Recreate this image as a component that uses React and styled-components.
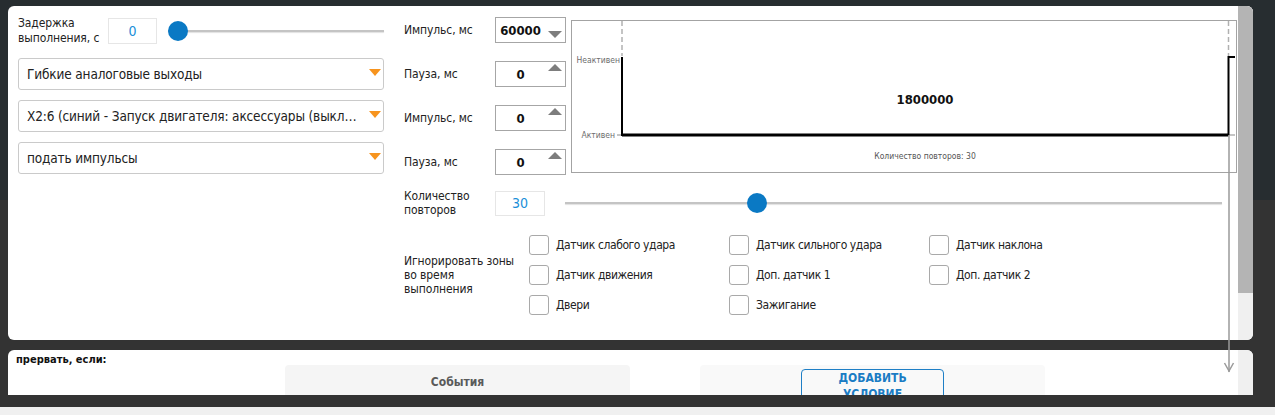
import React from "react";
import styled, { createGlobalStyle } from "styled-components";

const GlobalStyle = createGlobalStyle`
  html, body {
    margin: 0;
    padding: 0;
  }
  body {
    font-family: "DejaVu Sans Condensed", Tahoma, "DejaVu Sans", sans-serif;
    color: #222;
    background: #333;
  }
`;

const Page = styled.div`
  width: 1275px;
  height: 415px;
  display: flex;
  flex-direction: column;
  overflow: hidden;
`;

const Backdrop = styled.div`
  height: 407px;
  flex: none;
  padding: 6px 0 0 8px;
  box-sizing: border-box;
  background: linear-gradient(180deg, #272d30 0, #272d30 200px, #333 200px);
`;

const BottomStrip = styled.div`
  height: 8px;
  flex: none;
  background: #f0f0f0;
`;

const Viewport = styled.div`
  position: relative;
  width: 1245px;
  height: 389px;
  overflow: hidden;
  display: flex;
  flex-direction: column;
  gap: 10px;
`;

const Card = styled.div`
  flex: none;
  display: flex;
  height: ${({ h }) => h}px;
  background: #fff;
  border-radius: 6px;
  overflow: hidden;
`;

const CardBody = styled.div`
  flex: 1;
  min-width: 0;
  box-sizing: border-box;
  padding: ${({ pad }) => pad};
`;

const Track = styled.div`
  width: 15px;
  flex: none;
  background: #f0f0f0;
  display: flex;
  flex-direction: column;
`;

const Thumb = styled.div`
  height: ${({ h }) => h}px;
  background: #b4b4b4;
`;

const MainGrid = styled.div`
  display: grid;
  grid-template-columns: 366px 834px;
  column-gap: 20px;
`;

const LeftCol = styled.div`
  display: flex;
  flex-direction: column;
  gap: 10px;
`;

const DelayRow = styled.div`
  display: flex;
  align-items: center;
  height: 26px;
  margin-bottom: 4px;
`;

const Label = styled.div`
  width: ${({ w }) => w}px;
  flex: none;
  font-size: 12px;
  line-height: ${({ lh }) => lh || 15}px;
  letter-spacing: -0.1px;
  color: #222;
`;

const ValueBox = styled.div`
  width: ${({ w }) => w}px;
  height: ${({ h }) => h || 26}px;
  flex: none;
  box-sizing: border-box;
  border: 1px solid #e6e6e6;
  display: flex;
  align-items: center;
  justify-content: center;
  font-size: 14px;
  color: #1a8fd8;
`;

const SliderWrap = styled.div`
  position: relative;
  flex: 1;
  height: 20px;
  margin: ${({ m }) => m || "0"};
`;

const SliderLine = styled.div`
  position: absolute;
  left: 0;
  right: 0;
  top: 9px;
  height: 2px;
  background: #c4c4c4;
  box-shadow: 0 1px 1px rgba(0, 0, 0, 0.12);
`;

const SliderKnob = styled.div`
  position: absolute;
  top: 0;
  width: 20px;
  height: 20px;
  border-radius: 50%;
  background: #0a79c4;
`;

const Slider = ({ value, max, m }) => {
  const ratio = value / max;
  return (
    <SliderWrap m={m}>
      <SliderLine />
      <SliderKnob style={{ left: `calc((100% - 20px) * ${ratio})` }} />
    </SliderWrap>
  );
};

const SelectBox = styled.div`
  height: 32px;
  box-sizing: border-box;
  border: 1px solid #cacaca;
  border-radius: 3px;
  display: flex;
  align-items: center;
  padding: 0 2px 0 8px;
  font-size: 13.5px;
  letter-spacing: -0.15px;
  color: #222;
`;

const SelectText = styled.span`
  flex: 1;
  min-width: 0;
  white-space: nowrap;
  overflow: hidden;
  text-overflow: ellipsis;
`;

const OrangeArrow = styled.span`
  flex: none;
  width: 0;
  height: 0;
  margin: -3px 0 0 8px;
  border-left: 6.5px solid transparent;
  border-right: 6.5px solid transparent;
  border-top: 7px solid #f7941e;
`;

const Select = ({ children }) => (
  <SelectBox>
    <SelectText>{children}</SelectText>
    <OrangeArrow />
  </SelectBox>
);

const RightCol = styled.div`
  display: flex;
  flex-direction: column;
`;

const TopRow = styled.div`
  display: flex;
  align-items: flex-start;
`;

const PulseGrid = styled.div`
  display: grid;
  grid-template-columns: 91px 71px;
  grid-auto-rows: 26px;
  row-gap: 18px;
  margin-top: -1px;
  align-items: center;
`;

const PulseBox = styled.div`
  height: 26px;
  box-sizing: border-box;
  border: 1px solid #a6a6a6;
  display: flex;
`;

const PulseValue = styled.div`
  flex: 1;
  display: flex;
  align-items: center;
  justify-content: center;
  font-size: 13px;
  font-weight: bold;
  color: #111;
`;

const Spin = styled.div`
  width: 20px;
  flex: none;
  display: flex;
  justify-content: center;
  padding-top: ${({ dir }) => (dir === "down" ? 13 : 2)}px;
  box-sizing: border-box;
`;

const SpinArrow = styled.span`
  width: 0;
  height: 0;
  border-left: 7px solid transparent;
  border-right: 7px solid transparent;
  ${({ dir }) =>
    dir === "down"
      ? "border-top: 7px solid #7d7d7d;"
      : "border-bottom: 7px solid #7d7d7d;"}
`;

const PulseInput = ({ value, dir }) => (
  <PulseBox>
    <PulseValue>{value}</PulseValue>
    <Spin dir={dir}>
      <SpinArrow dir={dir} />
    </Spin>
  </PulseBox>
);

const ChartBox = styled.div`
  flex: 1;
  height: 153px;
  margin: 2px 1px 0 5px;
  box-sizing: border-box;
  border: 1px solid #a3a3a3;
`;

const Chart = () => (
  <ChartBox>
    <svg width="664" height="151" viewBox="0 0 664 151" style={{ display: "block" }}>
      <g fontFamily="'DejaVu Sans Condensed', 'DejaVu Sans', sans-serif">
        <line x1="50" y1="0" x2="50" y2="35" stroke="#b0b0b0" strokeWidth="1.5" strokeDasharray="5 3" />
        <line x1="656.5" y1="0" x2="656.5" y2="35" stroke="#b0b0b0" strokeWidth="1.5" strokeDasharray="5 3" />
        <text x="48" y="42" fontSize="8.5" fill="#6d6d6d" textAnchor="end">Неактивен</text>
        <text x="43" y="117" fontSize="8.5" fill="#6d6d6d" textAnchor="end">Активен</text>
        <line x1="45" y1="114" x2="50" y2="114" stroke="#b0b0b0" strokeWidth="1.5" />
        <line x1="657" y1="114" x2="663" y2="114" stroke="#b0b0b0" strokeWidth="1.5" />
        <polyline points="50,36 50,114 656.5,114" fill="none" stroke="#000" strokeWidth="2" />
        <line x1="50" y1="114" x2="656.5" y2="114" stroke="#000" strokeWidth="3" />
        <polyline points="656.5,114 656.5,36 663,36" fill="none" stroke="#000" strokeWidth="2" />
        <text x="353" y="83" fontSize="13" fontWeight="bold" fill="#111" textAnchor="middle">1800000</text>
        <text x="353" y="138" fontSize="8.5" fill="#555" textAnchor="middle">Количество повторов: 30</text>
      </g>
    </svg>
  </ChartBox>
);

const RepeatRow = styled.div`
  display: flex;
  align-items: center;
  margin-top: 14px;
`;

const IgnoreRow = styled.div`
  display: flex;
  align-items: center;
  margin-top: 18px;
`;

const CheckGrid = styled.div`
  display: grid;
  grid-template-columns: repeat(3, 200px);
  grid-auto-rows: 20px;
  row-gap: 10px;
`;

const CheckItem = styled.label`
  display: flex;
  align-items: center;
  gap: 7px;
  font-size: 12px;
  letter-spacing: -0.4px;
  color: #222;
`;

const CheckSquare = styled.span`
  width: 20px;
  height: 20px;
  box-sizing: border-box;
  border: 1px solid #a9a9a9;
  border-radius: 3px;
  background: #fff;
  flex: none;
`;

const Check = ({ children }) => (
  <CheckItem>
    <CheckSquare />
    {children}
  </CheckItem>
);

const AbortTitle = styled.div`
  height: 12px;
  font-size: 11px;
  font-weight: bold;
  line-height: 14px;
  color: #111;
`;

const AbortRow = styled.div`
  display: flex;
  gap: 70px;
  margin-left: 269px;
`;

const AbortPane = styled.div`
  width: 345px;
  height: 80px;
  border-radius: 4px;
  background: ${({ bg }) => bg};
  display: flex;
  justify-content: center;
  align-items: flex-start;
  padding-top: ${({ pt }) => pt}px;
  box-sizing: border-box;
`;

const PaneTitle = styled.div`
  font-size: 12px;
  font-weight: bold;
  color: #5a5a5a;
`;

const AddButton = styled.div`
  width: 143px;
  height: 34px;
  box-sizing: border-box;
  padding: 0 16px;
  border: 1px solid #1f7fc6;
  border-radius: 4px;
  font-size: 12px;
  font-weight: bold;
  line-height: 16px;
  color: #1a7cc4;
  text-align: center;
  text-transform: uppercase;
`;

const ArrowOverlay = styled.svg`
  position: absolute;
  left: 1215px;
  top: 129px;
  pointer-events: none;
`;

export default function App() {
  return (
    <Page>
      <GlobalStyle />
      <Backdrop>
        <Viewport>
          <Card h={334}>
            <CardBody pad="12px 0 0 10px">
              <MainGrid>
                <LeftCol>
                  <DelayRow>
                    <Label w={90}>
                      Задержка
                      <br />
                      выполнения, с
                    </Label>
                    <ValueBox w={49}>0</ValueBox>
                    <Slider value={0} max={100} m="0 0 0 11px" />
                  </DelayRow>
                  <Select>Гибкие аналоговые выходы</Select>
                  <Select>X2:6 (синий - Запуск двигателя: аксессуары (выключено))</Select>
                  <Select>подать импульсы</Select>
                </LeftCol>
                <RightCol>
                  <TopRow>
                    <PulseGrid>
                      <Label w={91}>Импульс, мс</Label>
                      <PulseInput value="60000" dir="down" />
                      <Label w={91}>Пауза, мс</Label>
                      <PulseInput value="0" dir="up" />
                      <Label w={91}>Импульс, мс</Label>
                      <PulseInput value="0" dir="up" />
                      <Label w={91}>Пауза, мс</Label>
                      <PulseInput value="0" dir="up" />
                    </PulseGrid>
                    <Chart />
                  </TopRow>
                  <RepeatRow>
                    <Label w={91} lh={14}>
                      Количество
                      <br />
                      повторов
                    </Label>
                    <ValueBox w={50} h={25}>30</ValueBox>
                    <Slider value={30} max={105} m="0 16px 0 20px" />
                  </RepeatRow>
                  <IgnoreRow>
                    <Label w={125} lh={14}>
                      Игнорировать зоны
                      <br />
                      во время
                      <br />
                      выполнения
                    </Label>
                    <CheckGrid>
                      <Check>Датчик слабого удара</Check>
                      <Check>Датчик сильного удара</Check>
                      <Check>Датчик наклона</Check>
                      <Check>Датчик движения</Check>
                      <Check>Доп. датчик 1</Check>
                      <Check>Доп. датчик 2</Check>
                      <Check>Двери</Check>
                      <Check>Зажигание</Check>
                    </CheckGrid>
                  </IgnoreRow>
                </RightCol>
              </MainGrid>
            </CardBody>
            <Track>
              <Thumb h={287} />
            </Track>
          </Card>
          <Card h={183}>
            <CardBody pad="3px 0 0 8px">
              <AbortTitle>прервать, если:</AbortTitle>
              <AbortRow>
                <AbortPane bg="#f5f5f5" pt={10}>
                  <PaneTitle>События</PaneTitle>
                </AbortPane>
                <AbortPane bg="#f9f9f9" pt={4}>
                  <AddButton>Добавить условие</AddButton>
                </AbortPane>
              </AbortRow>
            </CardBody>
            <Track />
          </Card>
          <ArrowOverlay width="12" height="240" viewBox="0 0 12 240">
            <line x1="6" y1="0" x2="6" y2="237" stroke="#9a9a9a" strokeWidth="1.5" />
            <polyline points="1.5,228 6,236 10.5,228" fill="none" stroke="#9a9a9a" strokeWidth="1.5" />
          </ArrowOverlay>
        </Viewport>
      </Backdrop>
      <BottomStrip />
    </Page>
  );
}
